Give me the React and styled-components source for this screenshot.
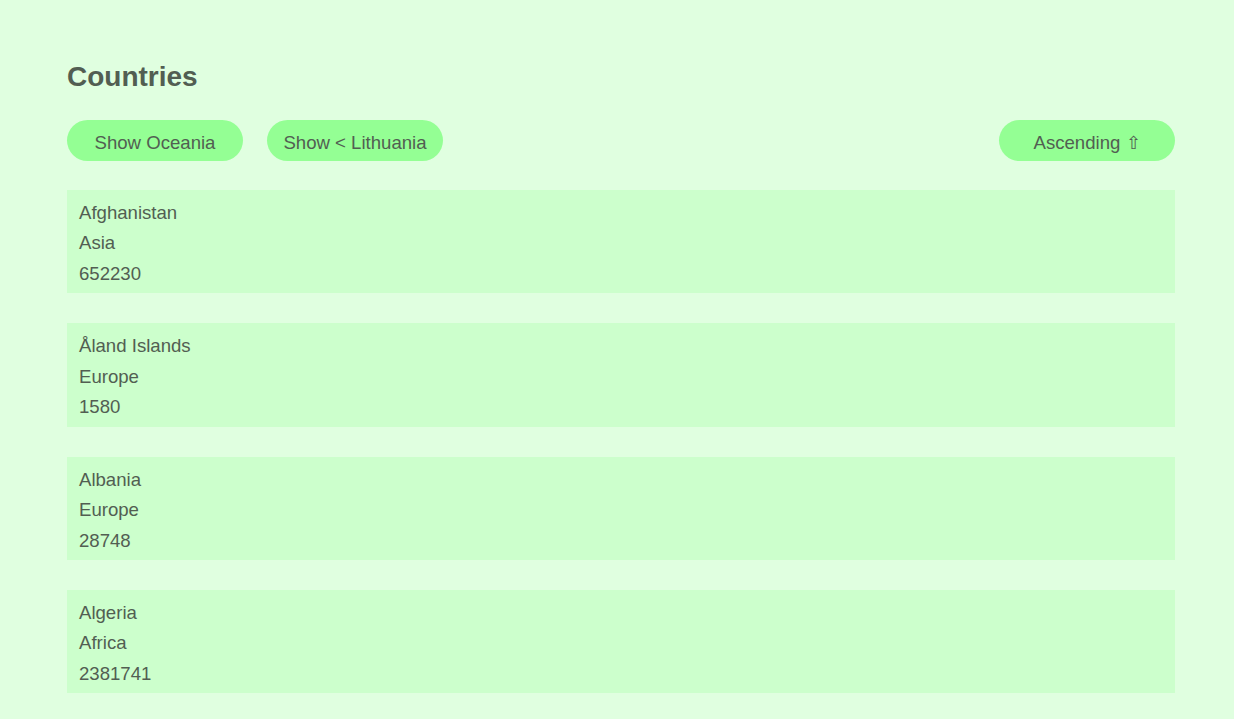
import React from "react";
import styled, { createGlobalStyle } from "styled-components";

const GlobalStyle = createGlobalStyle`
    body {
        margin: 0;
        background: #e0ffe0;
        font-family: "Liberation Sans", Arial, sans-serif;
        color: #525e52;
    }
`

const Page = styled.div`
    padding: 60px 59px 30px 67px;
`

const Title = styled.h2`
    margin: 0;
    font-size: 28px;
    line-height: 34px;
    font-weight: bold;
`

const Toolbar = styled.div`
    display: flex;
    align-items: center;
    gap: 24px;
    margin-top: 26px;
`

const Spacer = styled.div`
    flex: 1;
`

const Button = styled.button`
    width: 176px;
    height: 41px;
    border: none;
    border-radius: 21px;
    background: #94ff94;
    color: #525e52;
    font-family: "Liberation Sans", Arial, sans-serif;
    font-size: 18.6px;
    padding: 4px 0 0;
    cursor: pointer;
`

const Arrow = styled.span`
    font-size: 18px;
`

const List = styled.div`
    display: flex;
    flex-direction: column;
    gap: 30px;
    margin-top: 29px;
`

const Card = styled.div`
    background: #ccffcc;
    padding: 8px 12px 4px;
    font-size: 18.6px;
    line-height: 30.44px;
`

const countries = [
    {name: "Afghanistan", region: "Asia", area: 652230},
    {name: "Åland Islands", region: "Europe", area: 1580},
    {name: "Albania", region: "Europe", area: 28748},
    {name: "Algeria", region: "Africa", area: 2381741},
]

const App = () => (
    <>
        <GlobalStyle/>
        <Page>
            <Title>Countries</Title>
            <Toolbar>
                <Button>Show Oceania</Button>
                <Button>Show &lt; Lithuania</Button>
                <Spacer/>
                <Button>Ascending <Arrow>⇧</Arrow></Button>
            </Toolbar>
            <List>
                {countries.map(c => (
                    <Card key={c.name}>
                        <div>{c.name}</div>
                        <div>{c.region}</div>
                        <div>{c.area}</div>
                    </Card>
                ))}
            </List>
        </Page>
    </>
)

export default App;
